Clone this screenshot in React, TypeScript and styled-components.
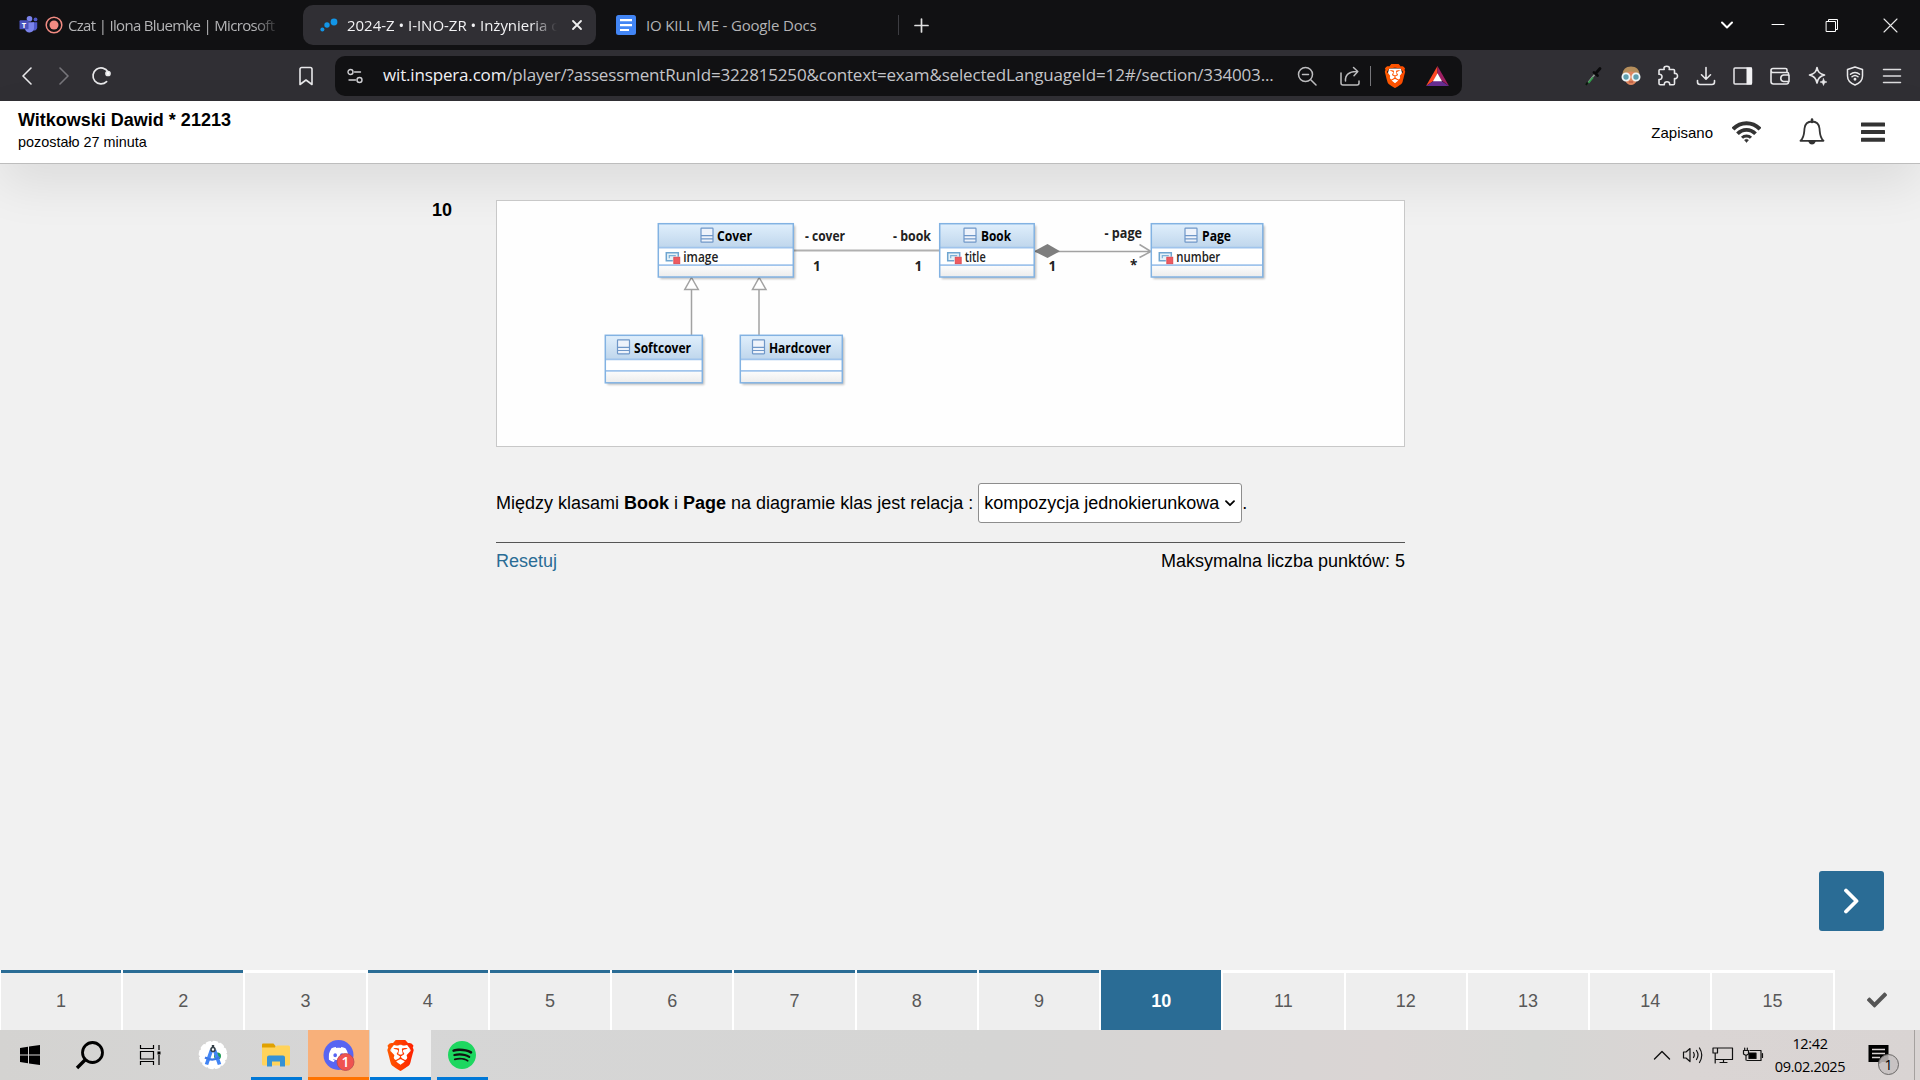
import React from "react";
import styled, { createGlobalStyle, css } from "styled-components";
import { SiBrave, SiDiscord, SiSpotify } from "react-icons/si";
import { FaCheck } from "react-icons/fa";

const ui = `"Open Sans", "Noto Sans", sans-serif`;
const arial = `"Liberation Sans", Arial, sans-serif`;

const GlobalStyle = createGlobalStyle`
  * { box-sizing: border-box; }
  html, body { margin: 0; padding: 0; }
  body { background: #f1f1f1; overflow: hidden; }
  svg { display: block; flex: none; }
`;

const Screen = styled.div`
  width: 1920px;
  height: 1080px;
  display: flex;
  flex-direction: column;
  background: #f1f1f1;
  font-family: ${arial};
  color: #000;
`;

/* ---------- browser chrome ---------- */

const TabStrip = styled.div`
  height: 50px;
  flex: none;
  display: flex;
  align-items: center;
  justify-content: space-between;
  background: #111113;
  font-family: ${ui};
`;

const Tabs = styled.div`
  display: flex;
  align-items: center;
`;

const Tab = styled.div<{ $w: number; $active?: boolean; $pad: number }>`
  width: ${(p) => p.$w}px;
  height: 40px;
  display: flex;
  align-items: center;
  padding-left: ${(p) => p.$pad}px;
  border-radius: 10px;
  background: ${(p) => (p.$active ? "#302f34" : "transparent")};
  color: ${(p) => (p.$active ? "#f2f2f4" : "#b4b4b6")};
`;

const TabTitle = styled.span<{ $w: number; $gap: number; $ls: number; $fade?: boolean }>`
  width: ${(p) => p.$w}px;
  margin-left: ${(p) => p.$gap}px;
  margin-top: -1px;
  white-space: nowrap;
  font-size: 15px;
  line-height: 22px;
  letter-spacing: ${(p) => p.$ls}px;
  ${(p) =>
    p.$fade &&
    css`
      mask-image: linear-gradient(to right, #000 calc(100% - 26px), transparent);
    `}
`;

const TabClose = styled.span`
  margin-left: 14px;
`;

const NewTab = styled.div`
  display: flex;
  align-items: center;
  gap: 16px;
  height: 20px;
  border-left: 1px solid #3d3d42;
  padding-left: 15px;
`;

const WindowButtons = styled.div`
  display: grid;
  grid-template-columns: 51px 51px 58px 58px;
  justify-items: center;
  align-items: center;
  margin-right: 1px;
`;

const Toolbar = styled.div`
  height: 51px;
  flex: none;
  display: flex;
  align-items: center;
  background: #302f34;
  font-family: ${ui};
`;

const NavButtons = styled.div`
  width: 335px;
  padding-left: 8px;
  display: grid;
  grid-template-columns: 37px 37px 37px 1fr 58px;
  justify-items: center;
  align-items: center;
  & > :last-child { grid-column: 5; }
`;

const UrlBar = styled.div`
  width: 1127px;
  height: 40px;
  display: flex;
  align-items: center;
  border-radius: 10px;
  background: #111113;
  padding-left: 12px;
`;

const UrlText = styled.span`
  width: 905px;
  margin-left: 20px;
  margin-top: -2px;
  white-space: nowrap;
  font-size: 17px;
  line-height: 24px;
  letter-spacing: -0.165px;
  color: #c4c4c8;
  b { font-weight: 400; color: #f0f0f4; }
`;

const UrlActions = styled.div`
  display: flex;
  align-items: center;
`;

const Gap = styled.span<{ $w: number }>`
  width: ${(p) => p.$w}px;
  flex: none;
`;

const UrlDivider = styled.span`
  width: 1px;
  height: 20px;
  background: #77777b;
`;

const Extensions = styled.div`
  margin-left: 113px;
  display: grid;
  grid-template-columns: repeat(9, 37.35px);
  justify-items: center;
  align-items: center;
`;

/* ---------- exam page ---------- */

const Header = styled.header`
  height: 63px;
  flex: none;
  display: flex;
  justify-content: space-between;
  background: #fff;
  border-bottom: 1px solid #bdbdbd;
  box-shadow: 0 20px 50px rgba(0, 0, 0, 0.09);
`;

const Candidate = styled.div`
  padding: 8px 0 0 18px;
`;

const CandidateName = styled.div`
  font-size: 18px;
  font-weight: 700;
  line-height: 22px;
`;

const TimeLeft = styled.div`
  font-size: 14.4px;
  line-height: 22px;
`;

const HeaderTools = styled.div`
  display: flex;
  align-items: center;
  padding-right: 35px;
  font-size: 15px;
`;

const Main = styled.main`
  flex: 1;
  display: grid;
  grid-template-columns: 432px 64px 909px 1fr;
  align-items: start;
  padding-top: 36px;
`;

const QuestionNumber = styled.div`
  grid-column: 2;
  font-size: 18px;
  font-weight: 700;
  line-height: 20px;
`;

const Question = styled.section`
  display: flex;
  flex-direction: column;
`;

const DiagramFrame = styled.div`
  height: 247px;
  border: 1px solid #c8c8c8;
  background: #fefefe;
`;

const Sentence = styled.div`
  display: flex;
  align-items: center;
  height: 40px;
  margin-top: 36px;
  font-size: 18px;
  white-space: pre;
`;

const Select = styled.div`
  width: 264px;
  height: 40px;
  margin-left: 5px;
  padding: 0 6px 0 5px;
  display: flex;
  align-items: center;
  justify-content: space-between;
  background: #fff;
  border: 1px solid #8d8d8d;
  border-radius: 3px;
`;

const Footer = styled.div`
  margin-top: 19px;
  border-top: 1px solid #555;
  padding-top: 7px;
  display: flex;
  justify-content: space-between;
  font-size: 18px;
  line-height: 22px;
`;

const ResetLink = styled.span`
  color: #2a6c95;
`;

const NextRow = styled.div`
  grid-column: 1 / -1;
  align-self: end;
  display: flex;
  justify-content: flex-end;
  padding: 0 36px 39px 0;
`;

const NextButton = styled.div`
  width: 65px;
  height: 60px;
  display: grid;
  place-items: center;
  border-radius: 3px;
  background: #2a6c95;
`;

const Pager = styled.nav`
  height: 60px;
  flex: none;
  display: flex;
  background: #fff;
  padding-left: 1px;
`;

const PageCell = styled.div<{ $state: "done" | "open" | "current" }>`
  width: 122.24px;
  flex: none;
  border-right: 2px solid #fff;
  text-align: center;
  font-size: 18px;
  line-height: 56px;
  color: #585858;
  & > span {
    display: block;
    height: 60px;
    background: #eee;
    border-top: 3px solid ${(p) => (p.$state === "open" ? "#fff" : "#2a6c95")};
    ${(p) =>
      p.$state === "current" &&
      css`
        background: #2a6c95;
        color: #fff;
        font-weight: 700;
      `}
  }
`;

const FinishCell = styled.div`
  flex: 1;
  display: grid;
  place-items: center;
  background: #eee;
  color: #555;
`;

/* ---------- taskbar ---------- */

const Taskbar = styled.footer`
  height: 50px;
  flex: none;
  display: flex;
  justify-content: space-between;
  background: linear-gradient(to right, #d4d3d1, #d6d6d6 18%, #d5d5d4 52%, #dad5d4 72%, #d6d6d4 80%, #dad5d4 88%, #d9d4d3);
  font-family: ${ui};
`;

const Apps = styled.div`
  display: grid;
  grid-template-columns: 60px 60px 61px 64px 62px 1px 61px 1px 61px 62px;
`;

const AppSlot = styled.div<{ $bg?: string; $line?: string; $lineW?: number }>`
  height: 50px;
  display: grid;
  place-items: center;
  background-color: ${(p) => p.$bg || "transparent"};
  ${(p) =>
    p.$line &&
    css`
      background-image: linear-gradient(${p.$line}, ${p.$line});
      background-size: ${p.$lineW}px 3px;
      background-repeat: no-repeat;
      background-position: bottom center;
    `}
`;

const Tray = styled.div`
  display: flex;
  align-items: center;
`;

const Clock = styled.div`
  width: 80px;
  margin-left: 6px;
  text-align: center;
  font-size: 14.5px;
  line-height: 23px;
  letter-spacing: -0.35px;
`;

const Notifications = styled.div`
  margin-top: 8px;
`;

const ShowDesktop = styled.div`
  width: 6px;
  height: 50px;
  border-left: 1px solid #a5a19f;
`;

/* ---------- icons ---------- */

type StrokeProps = { w: number; h: number; c?: string; s?: number; children: React.ReactNode };
const Stroke = ({ w, h, c = "#e8e8ea", s = 1.6, children }: StrokeProps) => (
  <svg width={w} height={h} viewBox={`0 0 ${w} ${h}`} fill="none" stroke={c} strokeWidth={s} strokeLinecap="round" strokeLinejoin="round">
    {children}
  </svg>
);

const Brave = ({ size, id, to }: { size: number; id: string; to: string }) => (
  <svg width={size} height={size} viewBox="0 0 24 24">
    <defs>
      <linearGradient id={id} x1="0" x2="1">
        <stop offset="0" stopColor="#ff5a00" />
        <stop offset="1" stopColor={to} />
      </linearGradient>
    </defs>
    <path d="M6 4.500L18 4.500L19 9L16.500 17L12 21L7.500 17L5 9Z" fill="#fff" />
    <SiBrave size={24} style={{ fill: `url(#${id})` }} />
  </svg>
);

const Teams = () => (
  <svg width="20" height="18" viewBox="0 0 20 18">
    <circle cx="16.500" cy="3.400" r="1.900" fill="#5059c9" />
    <path d="M13.500 6.300h4.700v5.200a3.200 3.200 0 0 1-4.700 2.700z" fill="#5059c9" />
    <circle cx="10.500" cy="2.800" r="2.800" fill="#7b83eb" />
    <path d="M6 6.300h9v6a4.600 4.600 0 0 1-9 .8z" fill="#7b83eb" />
    <rect x="0.500" y="4.300" width="9" height="9" rx="0.900" fill="#4b53bc" />
    <text x="5" y="11.600" textAnchor="middle" fontFamily="Open Sans, sans-serif" fontWeight="700" fontSize="7.500" fill="#fff">T</text>
  </svg>
);

/* ---------- class diagram ---------- */

type ClassProps = { x: number; y: number; w: number; h: number; attr?: string; attrW?: number; name: string; iconX: number; nameX: number; nameW: number };

const ClassBox = ({ x, y, w, h, name, attr, attrW, iconX, nameX, nameW }: ClassProps) => {
  const split = attr ? 41.5 : 35.5;
  return (
    <g>
      <rect x={x + 2} y={y + 2} width={w} height={h} fill="#000" opacity="0.25" filter="url(#soft)" />
      <rect x={x} y={y} width={w} height={h} fill="#fff" />
      <rect x={x} y={y} width={w} height="24" fill="url(#head)" />
      <rect x={x} y={y + split} width={w} height={h - split} fill="url(#foot)" />
      <path d={`M${x} ${y + 24}h${w}M${x} ${y + split}h${w}`} stroke="#a0c4ec" strokeWidth="1.800" />
      <rect x={x} y={y} width={w} height={h} fill="none" stroke="#82b2e2" strokeWidth="1.500" />
      <g stroke="#6f97c8" strokeWidth="1.200">
        <rect x={iconX} y={y + 4.5} width="12" height="14" rx="0.500" fill="#eef3fb" />
        <path d={`M${iconX} ${y + 12}h12M${iconX} ${y + 15.2}h12`} />
      </g>
      <text x={nameX} y={y + 17.3} fontWeight="700" textLength={nameW} lengthAdjust="spacingAndGlyphs">{name}</text>
      {attr && (
        <g>
          <path d={`M${x + 14.5} ${y + 37}h-6.500v-8h12v4`} fill="#e6f2f8" stroke="#6fa5d0" strokeWidth="1.500" />
          <path d={`M${x + 11} ${y + 34.5}v-2.500h6.500`} fill="none" stroke="#7db0d6" strokeWidth="1.200" />
          <rect x={x + 15.5} y={y + 33.5} width="6" height="6.500" fill="#ee5a5f" stroke="#d9444c" strokeWidth="0.800" />
          <text x={x + 25} y={y + 38.5} fill="#222" fontWeight="600" textLength={attrW} lengthAdjust="spacingAndGlyphs">{attr}</text>
        </g>
      )}
    </g>
  );
};

const Label = ({ x, y, w, children }: { x: number; y: number; w?: number; children: string }) => (
  <text x={x} y={y} fontWeight="700" fill="#222" textLength={w} lengthAdjust={w ? "spacingAndGlyphs" : undefined}>{children}</text>
);

const Diagram = () => (
  <svg width="907" height="245" viewBox="497 201 907 245" fontFamily="Open Sans, Noto Sans, sans-serif" fontSize="13.500">
    <defs>
      <linearGradient id="head" x1="0" y1="0" x2="0" y2="1">
        <stop offset="0" stopColor="#e0effc" />
        <stop offset="1" stopColor="#bfd6ec" />
      </linearGradient>
      <linearGradient id="foot" x1="0" y1="0" x2="0" y2="1">
        <stop offset="0" stopColor="#fdfdfd" />
        <stop offset="1" stopColor="#ececec" />
      </linearGradient>
      <filter id="soft"><feGaussianBlur stdDeviation="1" /></filter>
    </defs>
    <g fill="none" stroke="#a2a2a2" strokeWidth="1.500">
      <path d="M794 250.500H939" stroke="#b0b0b0" strokeWidth="2" />
      <path d="M1034 251.500H1151M1139.500 244.500L1151 251.500L1139.500 257.500" />
      <path d="M691.500 289V335M759 289V335" />
      <path d="M691.500 277.500L698.300 289.500H684.800ZM759.200 277.500L766 289.500H752.500Z" fill="#fff" />
    </g>
    <path d="M1034 251.200L1047.500 244L1060 251.200L1047.500 258Z" fill="#7e7e7e" />
    <ClassBox x={658.3} y={223.7} w={135} h={53.3} name="Cover" iconX={701} nameX={717} nameW={35} attr="image" attrW={35} />
    <ClassBox x={939.7} y={223.7} w={94.5} h={53.3} name="Book" iconX={964} nameX={981} nameW={30} attr="title" attrW={21} />
    <ClassBox x={1151.3} y={223.7} w={111.5} h={53.3} name="Page" iconX={1185} nameX={1202} nameW={29} attr="number" attrW={44} />
    <ClassBox x={605.3} y={335.3} w={97} h={47.5} name="Softcover" iconX={617.5} nameX={634} nameW={57} />
    <ClassBox x={740.3} y={335.3} w={102} h={47.5} name="Hardcover" iconX={752.5} nameX={769} nameW={62} />
    <Label x={805} y={241} w={40}>- cover</Label>
    <Label x={893} y={241} w={38}>- book</Label>
    <Label x={1104.5} y={237.6} w={37.5}>- page</Label>
    <Label x={813} y={270.5}>1</Label>
    <Label x={914.5} y={270.5}>1</Label>
    <Label x={1048.5} y={270.5}>1</Label>
    <Label x={1130} y={270}>*</Label>
  </svg>
);

const pages = Array.from({ length: 15 }, (_, i) => i + 1);
const stateOf = (n: number) => (n === 10 ? "current" : n === 3 || n > 10 ? "open" : "done");

export default function App() {
  return (
    <Screen>
      <GlobalStyle />
      <TabStrip>
        <Tabs>
          <Tab $w={303} $pad={19}>
            <Teams />
            <Gap $w={6} />
            <svg width="18" height="18" viewBox="0 0 18 18">
              <circle cx="9" cy="9" r="7.800" fill="none" stroke="#f28b82" strokeWidth="1.500" />
              <circle cx="9" cy="9" r="4.500" fill="#f28b82" />
            </svg>
            <TabTitle $w={212} $gap={5} $ls={-0.68} $fade>Czat | Ilona Bluemke | Microsoft</TabTitle>
          </Tab>
          <Tab $w={293} $pad={17} $active>
            <svg width="18" height="14" viewBox="0 0 18 14" fill="#1296e8">
              <circle cx="2.400" cy="11.500" r="2" />
              <circle cx="7" cy="7" r="2.700" />
              <circle cx="14" cy="4" r="3.400" />
            </svg>
            <TabTitle $w={210} $gap={9} $ls={-0.02} $fade>2024-Z • I-INO-ZR • Inżynieria o</TabTitle>
            <TabClose>
              <Stroke w={12} h={12} s={1.8} c="#f0f0f0"><path d="M2 2L10 10M10 2L2 10" /></Stroke>
            </TabClose>
          </Tab>
          <Tab $w={302} $pad={20}>
            <svg width="20" height="20" viewBox="0 0 20 20">
              <rect width="20" height="20" rx="2.500" fill="#4285f4" />
              <path d="M4 5.200H16M4 10.200H16M4 15H13" stroke="#fff" strokeWidth="2.200" />
            </svg>
            <TabTitle $w={190} $gap={10} $ls={-0.17}>IO KILL ME - Google Docs</TabTitle>
          </Tab>
          <NewTab>
            <Stroke w={15} h={15} s={1.7} c="#e0e0e0"><path d="M7.500 1V14M1 7.500H14" /></Stroke>
          </NewTab>
        </Tabs>
        <WindowButtons>
          <Stroke w={14} h={10} s={2} c="#fff"><path d="M2 2.500L7 7.500L12 2.500" /></Stroke>
          <Stroke w={14} h={3} s={1} c="#fff"><path d="M1 0.500H13" /></Stroke>
          <Stroke w={15} h={15} s={1} c="#fff"><path d="M1.500 3.500H10.500V13.500H1.500ZM3.500 3V1.500H12.500V11.500H11" strokeLinejoin="miter" /></Stroke>
          <Stroke w={15} h={15} s={1.1} c="#e8e8e8"><path d="M1 1L14 14M14 1L1 14" /></Stroke>
        </WindowButtons>
      </TabStrip>

      <Toolbar>
        <NavButtons>
          <Stroke w={12} h={18}><path d="M10 1L2 9L10 17" /></Stroke>
          <Stroke w={12} h={18} c="#77767b"><path d="M2 1L10 9L2 17" /></Stroke>
          <Stroke w={20} h={20} s={1.7}>
            <path d="M15.600 15.600A8 8 0 1 1 17 6" />
            <circle cx="17" cy="7.500" r="2" fill="#fff" />
          </Stroke>
          <Stroke w={16} h={20}><path d="M2 18.500V3.200A1.700 1.700 0 0 1 3.700 1.500H12.300A1.700 1.700 0 0 1 14 3.200V18.500L8 14Z" /></Stroke>
        </NavButtons>
        <UrlBar>
          <Stroke w={16} h={16} c="#d0d0d4" s={1.4}>
            <circle cx="3.500" cy="4" r="2.500" /><path d="M7.500 4H13.500" />
            <circle cx="12.500" cy="12" r="2.500" /><path d="M2 12H8.500" />
          </Stroke>
          <UrlText><b>wit.inspera.com</b>/player/?assessmentRunId=322815250&amp;context=exam&amp;selectedLanguageId=12#/section/334003...</UrlText>
          <UrlActions>
            <Gap $w={9} />
            <Stroke w={20} h={20} c="#bdbdbf" s={1.5}><circle cx="8.500" cy="8.500" r="7" /><path d="M14 14L19 19M5.500 8.500H11.500" /></Stroke>
            <Gap $w={22} />
            <Stroke w={22} h={20} c="#bdbdbf" s={1.5}><path d="M2 7V17A2 2 0 0 0 4 19H18A2 2 0 0 0 20 17V15M6.500 15C6 9 10 5 18.500 5.500M14.500 1.500L18.800 5.500L15 9.800" /></Stroke>
            <Gap $w={9} />
            <UrlDivider />
            <Gap $w={12} />
            <Brave size={24} id="brave-shield" to="#fb4a00" />
            <Gap $w={19} />
            <svg width="23" height="20" viewBox="0 0 23 20">
              <path d="M11.500 0L0 20L8 14.500L11.500 7.500Z" fill="#ff4724" />
              <path d="M11.500 0L23 20L15.500 14.500L11.500 7.500Z" fill="#9e1f63" />
              <path d="M0 20H23L15.500 15H7.500Z" fill="#662d91" />
              <path d="M11.500 7.300L16 15.200H7Z" fill="#fff" />
            </svg>
          </UrlActions>
        </UrlBar>
        <Extensions>
          <svg width="18" height="20" viewBox="0 0 18 20">
            <path d="M10.500 7.500L3.500 16" stroke="#8f9a92" strokeWidth="1.600" />
            <path d="M8 11.500L3.500 17" stroke="#2fa04a" strokeWidth="1.500" />
            <path d="M2.500 16.500L1 19" stroke="#0b1a0d" strokeWidth="1.800" />
            <path d="M9 6.500L12.500 9.500M11.500 6.500L15 2.500" stroke="#0a0a0b" strokeWidth="2.800" strokeLinecap="round" />
          </svg>
          <svg width="20" height="20" viewBox="0 0 20 20">
            <path d="M1.500 10C1 3.500 5 .5 10 .5S19 3.500 18.500 10L16 13H4Z" fill="#b58e5b" />
            <path d="M3 9.500C4 7 7 5.500 10 5.500S16 7 17 9.500L16 14C15 17.500 12.500 19 10 19S5 17.500 4 14Z" fill="#de8760" />
            <circle cx="5" cy="11" r="3.600" fill="#5f9fae" stroke="#eef6f7" strokeWidth="1.800" />
            <circle cx="15" cy="11" r="3.600" fill="#5f9fae" stroke="#eef6f7" strokeWidth="1.800" />
            <path d="M8 16H12" stroke="#b8573f" strokeWidth="1.200" />
          </svg>
          <Stroke w={22} h={22}><path d="M3 4.500H7.200C6.300 1.800 8 1.200 9.700 1.200S13.100 1.800 12.200 4.500H16.500Q17.500 4.500 17.500 5.500V8.500C19.500 8 20.500 9.500 20.500 11S19.500 14 17.500 13.500V18.500Q17.500 19.800 16.300 19.800H12.700C12.900 17.500 11.500 16.700 10 16.700S7.100 17.500 7.300 19.800H3.300Q2 19.800 2 18.500V14.500C4.300 14.700 5 13 5 11.800S4.300 9 2 9.300V5.500Q2 4.500 3 4.500Z" /></Stroke>
          <Stroke w={20} h={20}><path d="M10 1.500V13M5.500 8.800L10 13.200L14.500 8.800M1.500 14.500V16A2.500 2.500 0 0 0 4 18.500H16A2.500 2.500 0 0 0 18.500 16V14.500" /></Stroke>
          <svg width="20" height="18" viewBox="0 0 20 18"><rect x="1" y="1" width="17.500" height="16" rx="1" fill="none" stroke="#e8e8ea" strokeWidth="1.500" /><rect x="13.500" y="0.500" width="5.500" height="17" fill="#f2f2f4" /></svg>
          <Stroke w={20} h={18}><path d="M17 5.500V3Q17 1.500 15.500 1.500H3Q1 1.500 1 3.500T3 5.500H17.500Q18.500 5.500 18.500 6.500V8.500M1 3.500V14.500Q1 17 3.500 17H16.500Q18.500 17 18.500 15V14.500M19 8H13.500A3.300 3.300 0 0 0 13.500 14.500H19Z" /></Stroke>
          <Stroke w={20} h={20}><path d="M9 1.500C9.800 6 11.500 8 16.500 9C11.500 10 9.800 12.500 9 17C8.200 12.500 6.500 10 1.500 9C6.500 8 8.200 6 9 1.500Z" /><path d="M15.500 12.500L16.500 15L19 16L16.500 17L15.500 19.500L14.500 17L12 16L14.500 15Z" fill="#e8e8ea" strokeWidth="0.500" /></Stroke>
          <Stroke w={18} h={20} s={1.5}><path d="M9 1L16.500 3.500V10C16.500 14.500 13 17.500 9 19C5 17.500 1.500 14.500 1.500 10V3.500ZM4.500 8.300C7 6 11 6 13.500 8.300M6 10.800C7.800 9.200 10.200 9.200 12 10.800" /><circle cx="9" cy="13.300" r="0.700" /></Stroke>
          <Stroke w={20} h={16} s={1.5} c="#dcdcde"><path d="M1.500 1.500H18.500M1.500 8H18.500M1.500 14.500H18.500" /></Stroke>
        </Extensions>
      </Toolbar>

      <Header>
        <Candidate>
          <CandidateName>Witkowski Dawid * 21213</CandidateName>
          <TimeLeft>pozostało 27 minuta</TimeLeft>
        </Candidate>
        <HeaderTools>
          <span>Zapisano</span>
          <Gap $w={19} />
          <svg width="29" height="22" viewBox="0 0 29 22" fill="none" stroke="#333">
            <path d="M1 8.200C8.500 0.200 20.500 0.200 28 8.200" strokeWidth="4" />
            <path d="M5.500 12.800C10.500 7.500 18.500 7.500 23.500 12.800" strokeWidth="3.700" />
            <path d="M10 16.800C12.500 14.300 16.500 14.300 19 16.800" strokeWidth="3" />
            <path d="M12.500 19Q14.500 17.500 16.500 19L14.500 21.500Z" fill="#333" strokeWidth="0.500" />
          </svg>
          <Gap $w={38} />
          <svg width="26" height="28" viewBox="0 0 26 28" fill="none" stroke="#333" strokeWidth="1.800">
            <path d="M1.500 22.800C5.500 19.500 5 15 5.500 10.500C6 6 9 3.500 13 3.500S20 6 20.500 10.500C21 15 20.500 19.500 24.500 22.800Z" strokeLinejoin="round" />
            <path d="M13 1.500V4" strokeLinecap="round" strokeWidth="2.500" />
            <path d="M10.500 24A2.700 2.700 0 0 0 15.500 24Z" fill="#333" />
          </svg>
          <Gap $w={36} />
          <svg width="24" height="20" viewBox="0 0 24 20" fill="#333">
            <rect y="0.500" width="24" height="4" rx="0.500" /><rect y="8" width="24" height="4" rx="0.500" /><rect y="15.800" width="24" height="4" rx="0.500" />
          </svg>
        </HeaderTools>
      </Header>

      <Main>
        <QuestionNumber>10</QuestionNumber>
        <Question>
          <DiagramFrame><Diagram /></DiagramFrame>
          <Sentence>
            <span>Między klasami <b>Book</b> i <b>Page</b> na diagramie klas jest relacja :</span>
            <Select>
              <span>kompozycja jednokierunkowa</span>
              <Stroke w={10} h={7} s={1.8} c="#000"><path d="M1 1.200L5 5.200L9 1.200" /></Stroke>
            </Select>
            <span>.</span>
          </Sentence>
          <Footer>
            <ResetLink>Resetuj</ResetLink>
            <span>Maksymalna liczba punktów: 5</span>
          </Footer>
        </Question>
        <NextRow>
          <NextButton>
            <Stroke w={17} h={26} s={3.8} c="#fff"><path d="M3 2.500L13.500 13L3 23.500" /></Stroke>
          </NextButton>
        </NextRow>
      </Main>

      <Pager>
        {pages.map((n) => (
          <PageCell key={n} $state={stateOf(n)}><span>{n}</span></PageCell>
        ))}
        <FinishCell><FaCheck size={20} /></FinishCell>
      </Pager>

      <Taskbar>
        <Apps>
          <AppSlot>
            <svg width="20" height="20" viewBox="0 0 20 20"><path d="M0 3L8 1.800V9.500H0ZM9 1.600L20 0V9.500H9ZM0 10.500H8V18.200L0 17ZM9 10.500H20V20L9 18.400Z" /></svg>
          </AppSlot>
          <AppSlot>
            <svg width="30" height="30" viewBox="0 0 30 30" fill="none" stroke="#000" strokeWidth="2.800"><circle cx="17.500" cy="12.500" r="10" /><path d="M10.500 19.500L2 28" strokeWidth="3.400" /></svg>
          </AppSlot>
          <AppSlot>
            <svg width="24" height="20" viewBox="0 0 24 20" fill="none" stroke="#000" strokeWidth="1.200"><path d="M1.500 0V3.500H14.500V0M1.500 6.500H14.500V14H1.500ZM1.500 20V16.500H14.500V20M20 0V5M20 10V20" /><rect x="18.500" y="6.500" width="3" height="3" fill="#000" strokeWidth="0" /></svg>
          </AppSlot>
          <AppSlot>
            <svg width="30" height="30" viewBox="0 0 30 30">
              <circle cx="15" cy="15" r="13.300" fill="#fff" stroke="#fff" strokeWidth="2" strokeDasharray="4 2.960" strokeLinecap="round" />
              <circle cx="19.500" cy="16" r="3.500" fill="#1f9d55" />
              <path d="M13.500 10L8.500 24.500M16.500 10L21.500 24.500" stroke="#4285f4" strokeWidth="3.600" />
              <path d="M7 17.500Q15 22 21.500 17" fill="none" stroke="#3b78e7" strokeWidth="2.200" />
              <path d="M15 5V8" stroke="#333f48" strokeWidth="2.400" />
              <circle cx="15" cy="9.500" r="2" fill="#fff" stroke="#333f48" strokeWidth="1.600" />
            </svg>
          </AppSlot>
          <AppSlot $line="#0078d7" $lineW={51}>
            <svg width="28" height="24" viewBox="0 0 28 24">
              <path d="M0 1.500Q0 .5 1 .5H11.500L13.500 3V5H0Z" fill="#e0a100" />
              <path d="M0 4.500H13L15 2.500H26.500Q28 2.500 28 4V21Q28 22.500 26.500 22.500H1.500Q0 22.500 0 21Z" fill="#ffd35b" />
              <path d="M5 23.500V14.500Q5 12.500 7 12.500H21Q23 12.500 23 14.500V23.500H18V18.500H10V23.500Z" fill="#3592d6" />
            </svg>
          </AppSlot>
          <span />
          <AppSlot $bg="#f8b07a" $line="#ff7300" $lineW={61}>
            <svg width="32" height="32" viewBox="0 0 32 32">
              <circle cx="15.500" cy="16" r="15" fill="#5865f2" />
              <svg x="5.500" y="5.500" width="20" height="20"><SiDiscord size={20} color="#fff" /></svg>
              <circle cx="22.500" cy="23" r="8.500" fill="#ef5350" stroke="#b94a4f" strokeWidth="0.800" />
              <text x="22.500" y="28" textAnchor="middle" fontFamily="Open Sans, sans-serif" fontWeight="600" fontSize="14" fill="#fff">1</text>
            </svg>
          </AppSlot>
          <span />
          <AppSlot $bg="#f0f0f0" $line="#0078d7" $lineW={61}><Brave size={31} id="brave-app" to="#ff2000" /></AppSlot>
          <AppSlot $line="#0078d7" $lineW={51}>
            <svg width="28" height="28" viewBox="0 0 24 24"><circle cx="12" cy="12" r="11" fill="#111" /><SiSpotify size={24} color="#1ed760" /></svg>
          </AppSlot>
        </Apps>
        <Tray>
          <Stroke w={18} h={12} s={1.4} c="#111"><path d="M1.500 10L9 2.500L16.500 10" /></Stroke>
          <Gap $w={11} />
          <Stroke w={22} h={18} s={1.2} c="#111"><path d="M1.500 6V12H4L8 15.500V2.500L4 6ZM11.500 6.500Q13 9 11.500 11.500M14.500 4.500Q17.500 9 14.500 13.500M17.500 2Q22 9 17.500 16.500" /></Stroke>
          <Gap $w={8} />
          <Stroke w={22} h={18} s={1.2} c="#111"><path d="M6 2H20.500V13.500H4M11.500 14V16.500M8 16.500H15M1 2H5.500V7H1ZM3.200 7V17" /></Stroke>
          <Gap $w={8} />
          <Stroke w={22} h={18} s={1.2} c="#111"><path d="M8 4.500H19V14.500H5M20.500 7.500V11.500M1.500 4.500H6.500V8L4 9.500L1.500 8ZM2.700 4V2M5.300 4V2M4 10V14" /><rect x="7" y="7" width="7" height="5.500" fill="#000" /></Stroke>
          <Clock>
            <div>12:42</div>
            <div>09.02.2025</div>
          </Clock>
          <Gap $w={18} />
          <Notifications>
            <svg width="32" height="32" viewBox="0 0 32 32">
              <path d="M0.500 2H20.500V19H14L10.500 22V19H0.500Z" fill="#000" />
              <path d="M4 6.500H17M4 10.500H17M4 14.500H12" stroke="#d9d4d3" strokeWidth="1.300" />
              <circle cx="20.500" cy="21.500" r="10" fill="#c4c0bf" fillOpacity="0.850" stroke="#6a6867" />
              <text x="20.500" y="26.500" textAnchor="middle" fontFamily="Open Sans, sans-serif" fontSize="14" fill="#000">1</text>
            </svg>
          </Notifications>
          <Gap $w={14} />
          <ShowDesktop />
        </Tray>
      </Taskbar>
    </Screen>
  );
}
